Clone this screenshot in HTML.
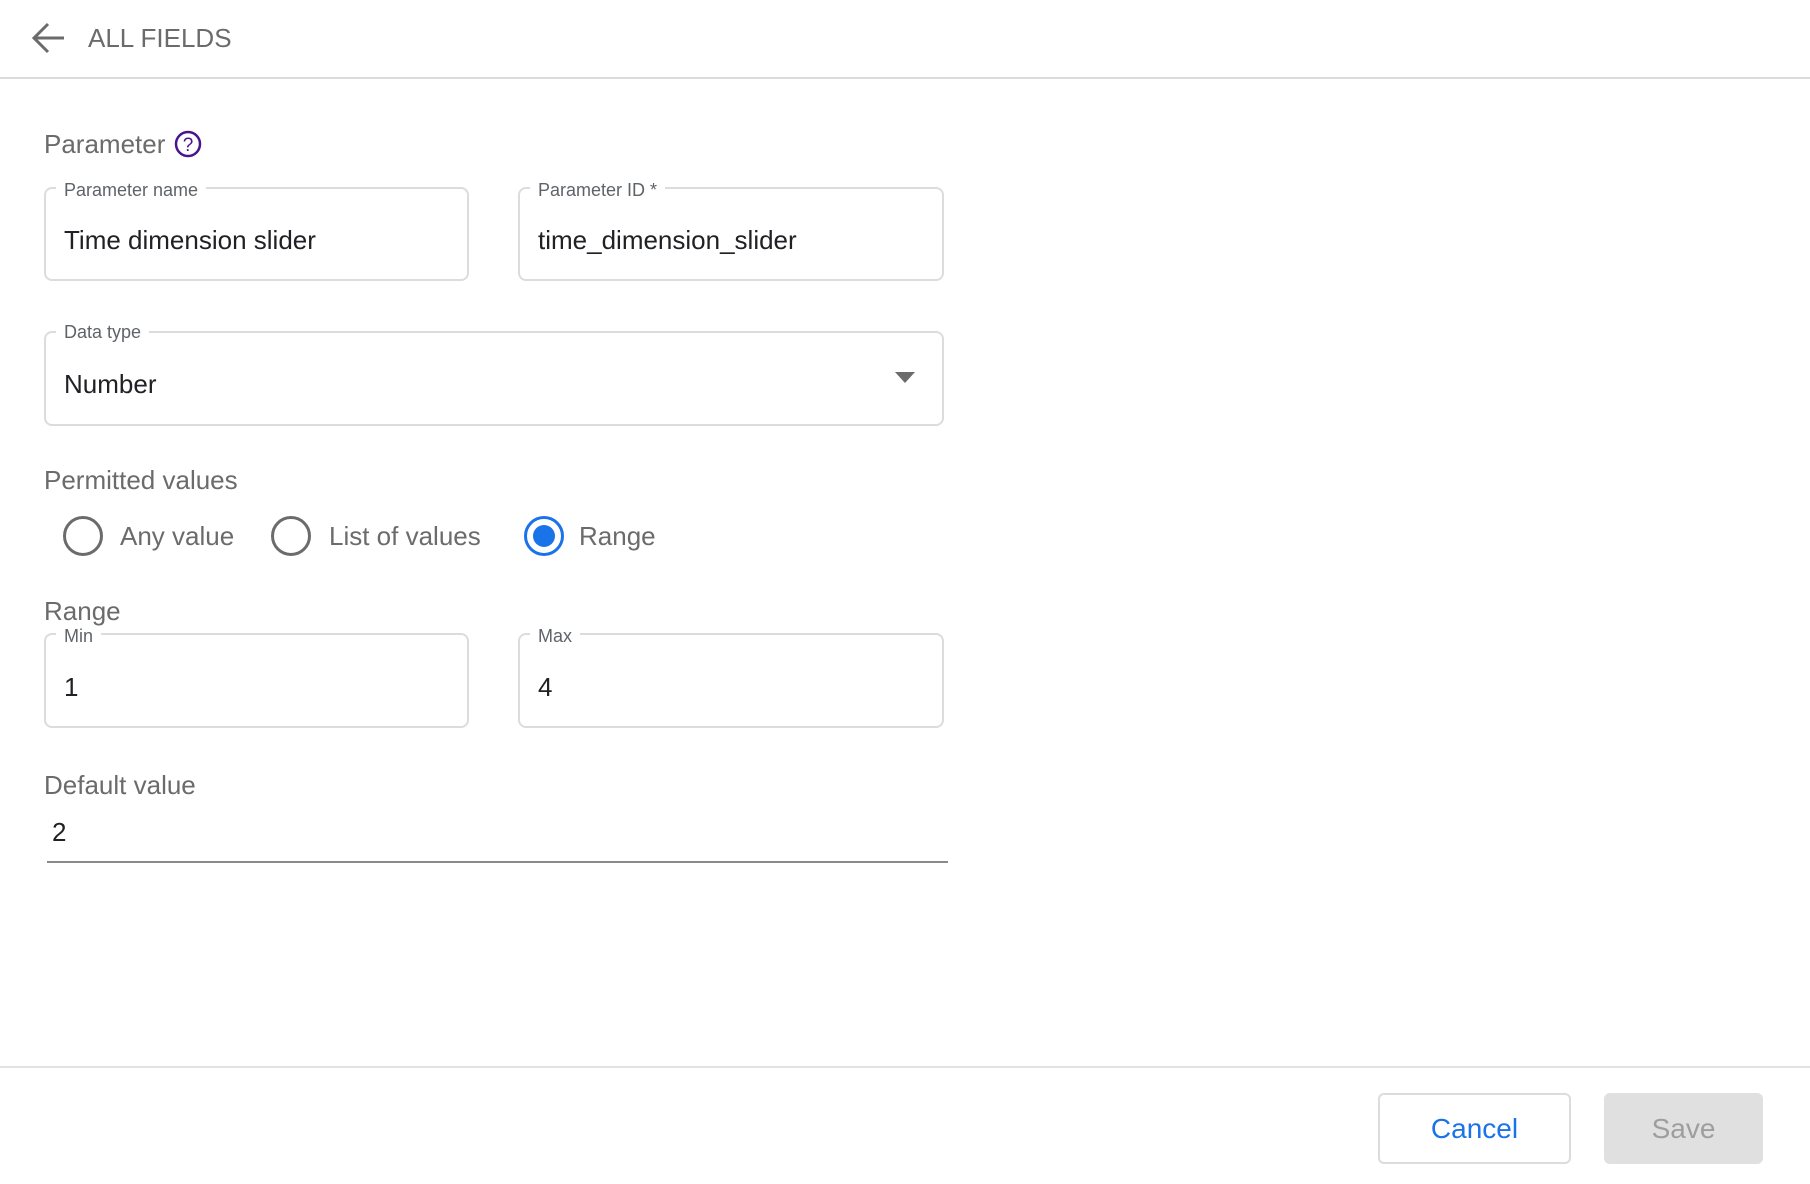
<!DOCTYPE html>
<html><head><meta charset="utf-8"><style>
*{box-sizing:border-box;margin:0;padding:0}
body{width:1810px;height:1184px;background:#fff;font-family:"Liberation Sans",Arial,sans-serif;position:relative;overflow:hidden}
.a{position:absolute;white-space:nowrap}
.box{position:absolute;border:2px solid #dcdcdc;border-radius:8px}
.lbl{position:absolute;background:#fff;padding:0 8px;font-size:18px;color:#5f6368;line-height:20px}
.val{position:absolute;font-size:26px;color:#202124;line-height:30px}
.sec{font-size:26px;color:#6b6b6b;line-height:30px}
.radio{position:absolute;width:40px;height:40px;border:3px solid #6b6b6b;border-radius:50%}
</style></head><body>
<svg class="a" style="left:30px;top:20px" width="38" height="36" viewBox="0 0 38 36"><path d="M34 18H5M18 4L4 18l14 14" fill="none" stroke="#6b6b6b" stroke-width="3"/></svg>
<div class="a" style="left:88px;top:23px;font-size:26px;color:#6b6b6b;line-height:30px">ALL FIELDS</div>
<div class="a" style="left:0;top:77px;width:1810px;height:2px;background:#dcdcdc"></div>

<div class="a sec" style="left:44px;top:129px">Parameter</div>
<svg class="a" style="left:174px;top:130px" width="28" height="28" viewBox="0 0 28 28"><circle cx="14" cy="14" r="12" fill="none" stroke="#4a148c" stroke-width="2.5"/><text x="14" y="21" text-anchor="middle" font-family="Liberation Sans" font-size="19" fill="#4a148c">?</text></svg>

<div class="box" style="left:44px;top:187px;width:425px;height:94px"></div>
<div class="lbl" style="left:56px;top:180px">Parameter name</div>
<div class="val" style="left:64px;top:225px">Time dimension slider</div>

<div class="box" style="left:518px;top:187px;width:426px;height:94px"></div>
<div class="lbl" style="left:530px;top:180px">Parameter ID *</div>
<div class="val" style="left:538px;top:225px">time_dimension_slider</div>

<div class="box" style="left:44px;top:331px;width:900px;height:95px"></div>
<div class="lbl" style="left:56px;top:322px">Data type</div>
<div class="val" style="left:64px;top:369px">Number</div>
<svg class="a" style="left:895px;top:372px" width="20" height="12"><path d="M0 0h20L10 11z" fill="#6b6b6b"/></svg>

<div class="a sec" style="left:44px;top:465px">Permitted values</div>
<div class="radio" style="left:63px;top:516px"></div>
<div class="a sec" style="left:120px;top:521px">Any value</div>
<div class="radio" style="left:271px;top:516px"></div>
<div class="a sec" style="left:329px;top:521px">List of values</div>
<div class="radio" style="left:524px;top:516px;border-color:#1a73e8"></div>
<div class="a" style="left:533px;top:525px;width:22px;height:22px;border-radius:50%;background:#1a73e8"></div>
<div class="a sec" style="left:579px;top:521px">Range</div>

<div class="a sec" style="left:44px;top:596px">Range</div>
<div class="box" style="left:44px;top:633px;width:425px;height:95px"></div>
<div class="lbl" style="left:56px;top:626px">Min</div>
<div class="val" style="left:64px;top:672px">1</div>
<div class="box" style="left:518px;top:633px;width:426px;height:95px"></div>
<div class="lbl" style="left:530px;top:626px">Max</div>
<div class="val" style="left:538px;top:672px">4</div>

<div class="a sec" style="left:44px;top:770px">Default value</div>
<div class="val" style="left:52px;top:817px">2</div>
<div class="a" style="left:47px;top:861px;width:901px;height:2px;background:#8a8a8a"></div>

<div class="a" style="left:0;top:1066px;width:1810px;height:2px;background:#e2e2e2"></div>
<div class="a" style="left:1378px;top:1093px;width:193px;height:71px;border:2px solid #dcdcdc;border-radius:6px;font-size:28px;color:#1a73e8;text-align:center;line-height:67px">Cancel</div>
<div class="a" style="left:1604px;top:1093px;width:159px;height:71px;background:#e0e0e0;border-radius:6px;font-size:28px;color:#9e9e9e;text-align:center;line-height:71px">Save</div>
</body></html>
